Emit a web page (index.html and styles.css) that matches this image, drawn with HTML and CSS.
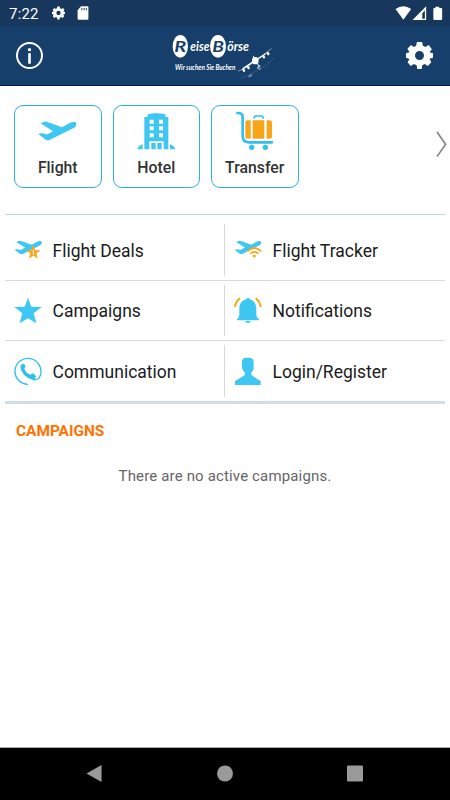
FILE: index.html
```html
<!DOCTYPE html>
<html lang="en">
<head>
<meta charset="utf-8">
<title>ReiseBörse</title>
<link rel="stylesheet" href="styles.css">
</head>
<body>
<svg class="defs" width="0" height="0">
  <symbol id="plane" viewBox="117 78 117 61" preserveAspectRatio="none"><path d="M126 86Q134 79 143 80L189 97L212 84Q222 79 230 82Q235 88 227 98L156 134Q149 139 140 135L118 118Q127 113 144 119L162 109Z"/></symbol>
</svg>
<div class="status">
  <span class="time">7:22</span>
  <svg class="s-gear" viewBox="0 0 24 24"><use href="#gear"/></svg>
  <svg class="s-card" viewBox="0 0 36 44"><path fill="#fff" fill-rule="evenodd" d="M12 1H32Q35 1 35 4V40Q35 43 32 43H4Q1 43 1 40V13ZM13 6V13H16V6ZM20 6V13H23V6ZM27 6V13H30V6Z"/></svg>
  <svg class="s-right" viewBox="0 0 144 46"><g fill="#fff"><path d="M0 9Q24-7 48 9L24 42Z"/><path fill-rule="evenodd" d="M94 1V43H52ZM90 14L82 22V39H90Z"/><path d="M122 2H134V6H140Q143 6 143 9V40Q143 43 140 43H119Q116 43 116 40V9Q116 6 119 6H122Z"/></g></svg>
</div>
<header class="header">
  <svg class="info" viewBox="0 0 81 81"><circle cx="40.500" cy="40.500" r="37.500" fill="none" stroke="#fff" stroke-width="6"/><circle cx="40.500" cy="23" r="5" fill="#fff"/><path d="M40.500 37V62" stroke="#fff" stroke-width="8" stroke-linecap="round"/></svg>
  <svg class="logo" viewBox="0 0 390 150">
    <ellipse cx="61" cy="37" rx="23" ry="34" fill="#fff"/><ellipse cx="174" cy="37" rx="24" ry="34" fill="#fff"/>
    <g class="script">
      <text x="43" y="53" class="cap" textLength="36" lengthAdjust="spacingAndGlyphs">R</text>
      <text x="91" y="51" class="word" textLength="57" lengthAdjust="spacingAndGlyphs">eise</text>
      <text x="157" y="53" class="cap" textLength="35" lengthAdjust="spacingAndGlyphs">B</text>
      <text x="202" y="51" class="word" textLength="65" lengthAdjust="spacingAndGlyphs">örse</text>
      <text x="45" y="108" class="tag" textLength="181" lengthAdjust="spacingAndGlyphs">Wir suchen Sie Buchen</text>
    </g>
    <g fill="none" stroke="#fff" stroke-linecap="round"><path stroke-width="2" opacity=".7" d="M235 111L262 99L289 79L334 44"/><path stroke-width="4" d="M250 103L286 79L316 60"/><ellipse cx="286" cy="80" rx="10" ry="11" fill="#fff" stroke="none"/><path stroke-width="3" d="M280 67L285 78L298 97M294 99L300 96"/><path stroke-width="7" d="M310 67L312 70M323 57L325 60M264 99L266 102M250 107L252 110"/><path stroke-width="2" stroke-dasharray="2 5" opacity=".3" d="M246 132L274 119L315 96L346 69"/><path stroke-width="6" opacity=".4" d="M293 102L300 104M268 127L274 123"/></g>
  </svg>
  <svg class="h-gear" viewBox="0 0 24 24"><g id="gear"><path fill="#fff" fill-rule="evenodd" d="M9.700 0H14.300L15 3.400L17.200 4.400L20.200 2.600L23 6.400L20.900 9.200L24 10V14L20.900 14.800L22.500 18L19.500 21.300L16.600 19.600L14.400 20.700L14 24H10L9.400 20.700L7 19.600L4.200 21.400L1.400 18L3.100 15L0 14V10L3.100 9.200L1.300 6L4.400 2.700L7 4.400L9 3.400ZM12 8A4 4 0 1 0 12 16A4 4 0 1 0 12 8Z"/></g></svg>
</header>
<main>
  <section class="tiles">
    <div class="tile"><div class="art"><svg class="t-plane"><use href="#plane"/></svg></div><span>Flight</span></div>
    <div class="tile"><div class="art"><svg class="t-hotel" viewBox="410 53 116 110"><path fill="#3fc7f4" fill-rule="evenodd" d="M442 65V57Q468 50 495 57V65H504V162H432V65ZM448 73V85H460V73ZM476 73V85H488V73ZM448 93V105H460V93ZM476 93V105H488V93ZM448 114V126H460V114ZM476 114V126H488V114ZM447 138V162H453V143H466V162H471V143H484V162H490V138ZM411 162Q413 151 427 147V162ZM509 162V147Q522 151 525 162Z"/></svg></div><span>Hotel</span></div>
    <div class="tile"><div class="art"><svg class="t-cart" viewBox="107 49 114 118"><path d="M111 55Q127 54 127 67V125Q127 143 145 143H215" fill="none" stroke="#2fc0ee" stroke-width="8" stroke-linecap="round"/><circle cx="154" cy="158" r="8" fill="#2fc0ee"/><circle cx="195" cy="158" r="8" fill="#2fc0ee"/><path d="M162 72V67Q162 64 166 64H184Q188 64 188 67V72" fill="none" stroke="#2fc0ee" stroke-width="5"/><path d="M151 77V132H141Q135 132 135 126V83Q135 77 141 77ZM157 77H192V132H157ZM199 77H209Q215 77 215 83V126Q215 132 209 132H199Z" fill="#f9a51a"/></svg></div><span>Transfer</span></div>
    <svg class="next" viewBox="0 0 34 80"><path d="M3 3L29 40L3 77" fill="none" stroke="#858585" stroke-width="5"/></svg>
  </section>
  <section class="menu">
    <div class="row first">
      <div class="item"><svg class="ico" viewBox="42 96 84 84"><use href="#plane" x="43" y="109" width="84" height="43"/><path d="M100 125L105 139L119 140L108 148L112 162L100 154L88 162L92 148L81 140L95 139Z" fill="#f9a51a" stroke="#f9a51a" stroke-width="2"/><path d="M100 138V152" stroke="#fff" stroke-width="3"/></svg><span>Flight Deals</span></div>
      <div class="item"><svg class="ico" viewBox="42 96 84 84"><use href="#plane" x="43" y="109" width="82" height="43"/><path d="M79 145Q102 119 126 145L103 164Z" fill="#fff"/><path d="M82 142Q103 122 124 142M91 149Q103 138 115 149" fill="none" stroke="#f9a51a" stroke-width="5"/><circle cx="103" cy="156" r="4.500" fill="#f9a51a"/></svg><span>Flight Tracker</span></div>
    </div>
    <div class="row">
      <div class="item"><svg class="ico" viewBox="42 276 84 84"><path d="M84 278L94 305L125 306L101 325L109 355L84 340L59 355L67 325L43 306L74 305Z" fill="#3fc7f4"/></svg><span>Campaigns</span></div>
      <div class="item"><svg class="ico" viewBox="42 276 84 84"><path d="M51 343Q58 338 58 329V309Q59 288 78 283Q84 275 90 283Q108 288 109 309V329Q109 338 117 343V346H51ZM75 348H92Q90 354 84 354Q77 354 75 348Z" fill="#3fc7f4"/><path d="M45 306Q47 289 60 280M122 306Q120 289 107 280" fill="none" stroke="#f9a51a" stroke-width="6"/></svg><span>Notifications</span></div>
    </div>
    <div class="row last">
      <div class="item"><svg class="ico" viewBox="42 64 84 84"><path d="M84 146A39 39 0 1 1 121 119Q117 134 98 132" fill="none" stroke="#2fc0ee" stroke-width="4"/><path d="M68 84Q77 86 77 91L73 99Q77 111 91 117L98 113Q106 115 108 123Q105 133 97 132Q65 121 61 93Q61 87 68 84Z" fill="#2fc0ee"/></svg><span>Communication</span></div>
      <div class="item"><svg class="ico" viewBox="42 64 84 84"><path d="M66 76Q68 66 78 66H90Q100 67 101 78V99Q98 108 94 111V117Q99 122 122 136V148H45V136Q68 123 75 117V111Q69 106 66 98Z" fill="#3fc7f4"/></svg><span>Login/Register</span></div>
    </div>
  </section>
  <h2>CAMPAIGNS</h2>
  <p>There are no active campaigns.</p>
</main>
<nav class="nav"><svg viewBox="0 0 16 18"><path d="M0 9L16 0V18Z"/></svg><svg viewBox="0 0 16 16"><circle cx="8" cy="8" r="8"/></svg><svg viewBox="0 0 17 17"><rect width="17" height="17" rx="1"/></svg></nav>
</body>
</html>
```
FILE: styles.css
```css
* { box-sizing: border-box; }
body { margin: 0; width: 450px; height: 800px; display: flex; flex-direction: column; background: #fff; font-family: Roboto, "Liberation Sans", sans-serif; overflow: hidden; }
svg { display: block; flex: none; }
.defs { position: absolute; }
#plane { fill: #3fc7f4; }
.status { height: 26px; flex: none; background: #18375d; color: #fff; display: flex; align-items: center; padding: 0 7px 0 9px; }
.time { font-size: 15px; width: 43px; line-height: 26px; padding-top: 2px; letter-spacing: .2px; }
.s-gear { width: 13px; height: 14px; }
.s-card { width: 12px; height: 14px; margin-left: 12px; }
.s-right { width: 48px; height: 15px; margin-left: auto; }
.header { height: 60px; flex: none; background: #163f6b; border-bottom: 1px solid #03145b; display: flex; align-items: center; padding: 0 17px 0 16px; }
.info { width: 27px; height: 27px; }
.logo { width: 130px; height: 50px; margin-left: 117px; margin-top: 7px; }
.script { font-family: Lato, sans-serif; font-style: italic; font-weight: bold; fill: #fff; }
.cap { font-size: 46px; fill: #163f6b; }
.word { font-size: 39px; }
.tag { font-size: 20px; }
.h-gear { width: 27px; height: 27px; margin-left: auto; }
main { flex: 1; }
.tiles { display: flex; gap: 11px; padding: 19px 3px 0 14px; height: 128px; align-items: flex-start; }
.tile { width: 87.500px; height: 83px; border: 1px solid #2aafe9; border-radius: 9px; display: flex; flex-direction: column; align-items: center; font-size: 15.800px; font-weight: 500; color: #333; }
.tile span { line-height: 20px; }
.art { height: 52px; width: 100%; display: flex; justify-content: center; align-items: flex-start; }
.t-plane { width: 39px; height: 20px; margin-top: 15px; }
.t-hotel { width: 38.700px; height: 36.700px; margin-top: 7px; }
.t-cart { width: 38px; height: 39.300px; margin-top: 5px; }
.next { width: 11.300px; height: 26.700px; margin: 26px 0 0 auto; }
.menu { margin: 0 5px; border-top: 1px solid #b9d9e7; border-bottom: 2px solid #cbdfee; }
.row { display: grid; grid-template-columns: 219px 221px; height: 60px; padding: 4px 0; border-bottom: 1px solid #dadada; }
.row.first { height: 66px; padding-top: 9px; }
.row.last { height: 61px; }
.item { display: flex; align-items: center; padding: 0 0 0 9px; font-size: 17.500px; color: #1b1b1b; white-space: nowrap; }
.item:nth-child(2) { border-left: 1px solid #d8d8d8; }
.ico { width: 28px; height: 28px; margin-right: 10.500px; }
.item span { padding-top: 1px; }
h2 { margin: 17px 0 0 16px; font-size: 15.400px; line-height: 20px; font-weight: 700; color: #ff7200; }
p { margin: 25px 0 0; text-align: center; font-size: 15px; line-height: 20px; color: #666; letter-spacing: .15px; }
.nav { height: 53px; flex: none; background: #000; border-top: 1px solid #aaa; display: flex; align-items: center; justify-content: space-between; padding: 0 87px 1px 86px; }
.nav svg { width: 16px; height: 17px; fill: #9a9a9a; }
```
